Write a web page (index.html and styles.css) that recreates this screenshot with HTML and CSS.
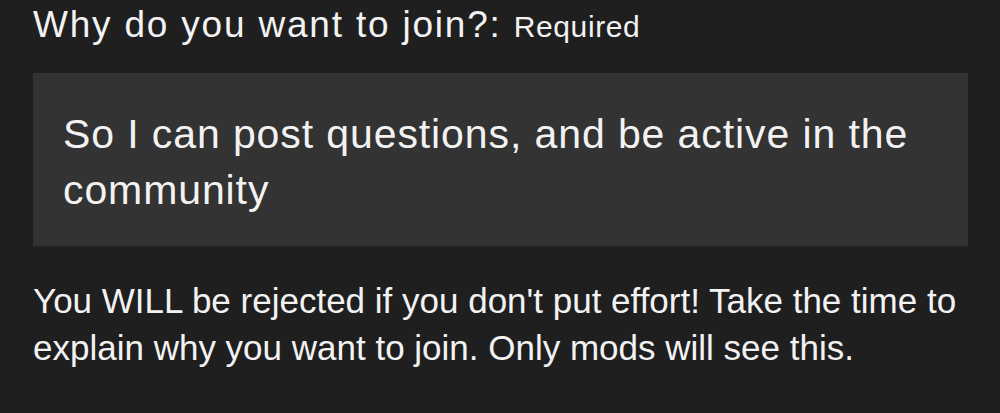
FILE: index.html
```html
<!DOCTYPE html>
<html lang="en">
<head>
    <meta charset="UTF-8">
    <meta name="viewport" content="width=device-width, initial-scale=1.0">
    <title>Join question</title>
    <link rel="stylesheet" href="styles.css">
</head>
<body>
    <div class="question">
        <div class="label">Why do you want to join?: <span class="req">Required</span></div>
        <div class="answer">So I can post questions, and be active in the community</div>
        <p class="hint">You WILL be rejected if you don't put effort! Take the time to explain why you want to join. Only mods will see this.</p>
    </div>
</body>
</html>
```

FILE: styles.css
```css
body {
    font-family: "Liberation Sans", Arial, sans-serif;
    background: #1f1f1f;
    color: #f2f2f2;
    margin: 0;
    padding: 0;
}
.question {
    width: 935px;
    padding: 5px 0 0 33px;
}
.label {
    font-size: 37px;
    line-height: 40px;
    letter-spacing: 1.8px;
}
.req {
    font-size: 30px;
    letter-spacing: 0.6px;
}
.answer {
    margin-top: 26px;
    background: #333333;
    border-bottom: 2px solid #2b2b2b;
    padding: 33px 30px 27px 30px;
    font-size: 41px;
    line-height: 56px;
    letter-spacing: 0.9px;
}
/* text under the box */
.hint {
    margin: 30px 0 0 0;
    font-size: 35px;
    line-height: 47px;
    letter-spacing: 0;
}
```
